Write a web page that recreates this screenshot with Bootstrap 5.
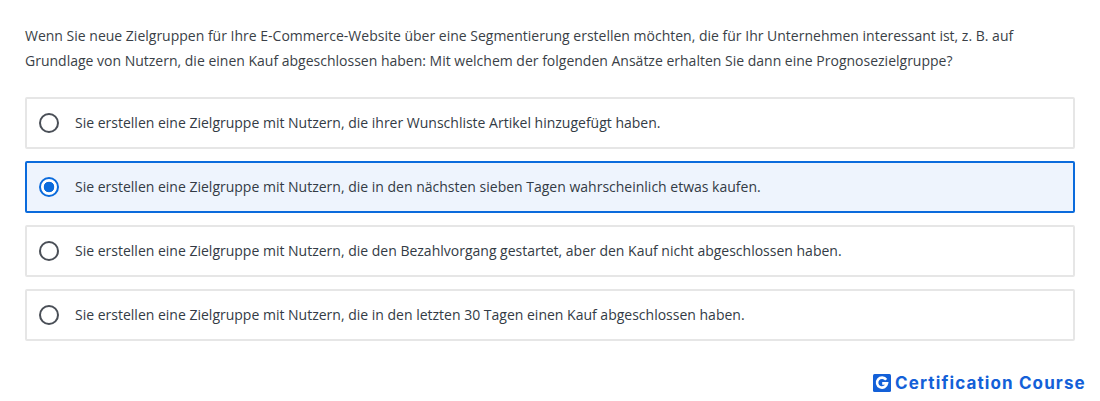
<!doctype html>
<html lang="de">
<head>
<meta charset="utf-8">
<title>Quiz</title>
<link href="https://cdn.jsdelivr.net/npm/bootstrap@5.3.0/dist/css/bootstrap.min.css" rel="stylesheet">
<style>
html,body{height:401px;overflow:hidden;background:#fff}
body{font-family:"Open Sans",sans-serif;font-size:14px;color:#333b45}
.quiz-wrap{padding:23px 25px 0}
.quiz-q{line-height:25px;margin:0 0 24px;color:#3a3f47}
.quiz-opts{gap:12px}
.quiz-opt{height:52px;border:2px solid #e6e6e6;border-radius:2px;padding-left:12px;gap:16px;background:#fff;margin:0;cursor:pointer}
.quiz-opt span{margin-bottom:2px}
.quiz-opt.is-on{border-color:#0b6bdc;background:#eef4fd}
.quiz-opt .form-check-input{width:20px;height:20px;margin:0;flex:none;background:#fff;border:2px solid #4a4f57;box-shadow:none;background-image:none}
.quiz-opt .form-check-input:checked{border-color:#0b6bdc;background-color:#fff;background-image:radial-gradient(circle,#0b6bdc 0,#0b6bdc 5px,transparent 5.6px)}
.quiz-brand{position:absolute;left:873px;top:373px;gap:4px;color:#1360d8;font-family:"Inter",sans-serif;font-weight:700;font-size:17px;line-height:18px;letter-spacing:1.12px}
.quiz-brand span{margin-top:1px}
</style>
</head>
<body>
<main class="quiz-wrap">
<p class="quiz-q">Wenn Sie neue Zielgruppen für Ihre E-Commerce-Website über eine Segmentierung erstellen möchten, die für Ihr Unternehmen interessant ist, z. B. auf Grundlage von Nutzern, die einen Kauf abgeschlossen haben: Mit welchem der folgenden Ansätze erhalten Sie dann eine Prognosezielgruppe?</p>
<div class="quiz-opts d-flex flex-column">
<label class="quiz-opt d-flex align-items-center"><input class="form-check-input" type="radio" name="a"><span>Sie erstellen eine Zielgruppe mit Nutzern, die ihrer Wunschliste Artikel hinzugefügt haben.</span></label>
<label class="quiz-opt is-on d-flex align-items-center"><input class="form-check-input" type="radio" name="a" checked><span>Sie erstellen eine Zielgruppe mit Nutzern, die in den nächsten sieben Tagen wahrscheinlich etwas kaufen.</span></label>
<label class="quiz-opt d-flex align-items-center"><input class="form-check-input" type="radio" name="a"><span>Sie erstellen eine Zielgruppe mit Nutzern, die den Bezahlvorgang gestartet, aber den Kauf nicht abgeschlossen haben.</span></label>
<label class="quiz-opt d-flex align-items-center"><input class="form-check-input" type="radio" name="a"><span>Sie erstellen eine Zielgruppe mit Nutzern, die in den letzten 30 Tagen einen Kauf abgeschlossen haben.</span></label>
</div>
</main>
<div class="quiz-brand d-flex align-items-center">
<svg width="18" height="18" viewBox="0 0 18 18" aria-hidden="true"><rect width="18" height="18" rx="1.5" fill="#1360d8"/><path d="M13.2 5.8A5 5 0 1 0 14 9.4H9.2" fill="none" stroke="#fff" stroke-width="2.6"/></svg>
<span>Certification Course</span>
</div>
</body>
</html>
